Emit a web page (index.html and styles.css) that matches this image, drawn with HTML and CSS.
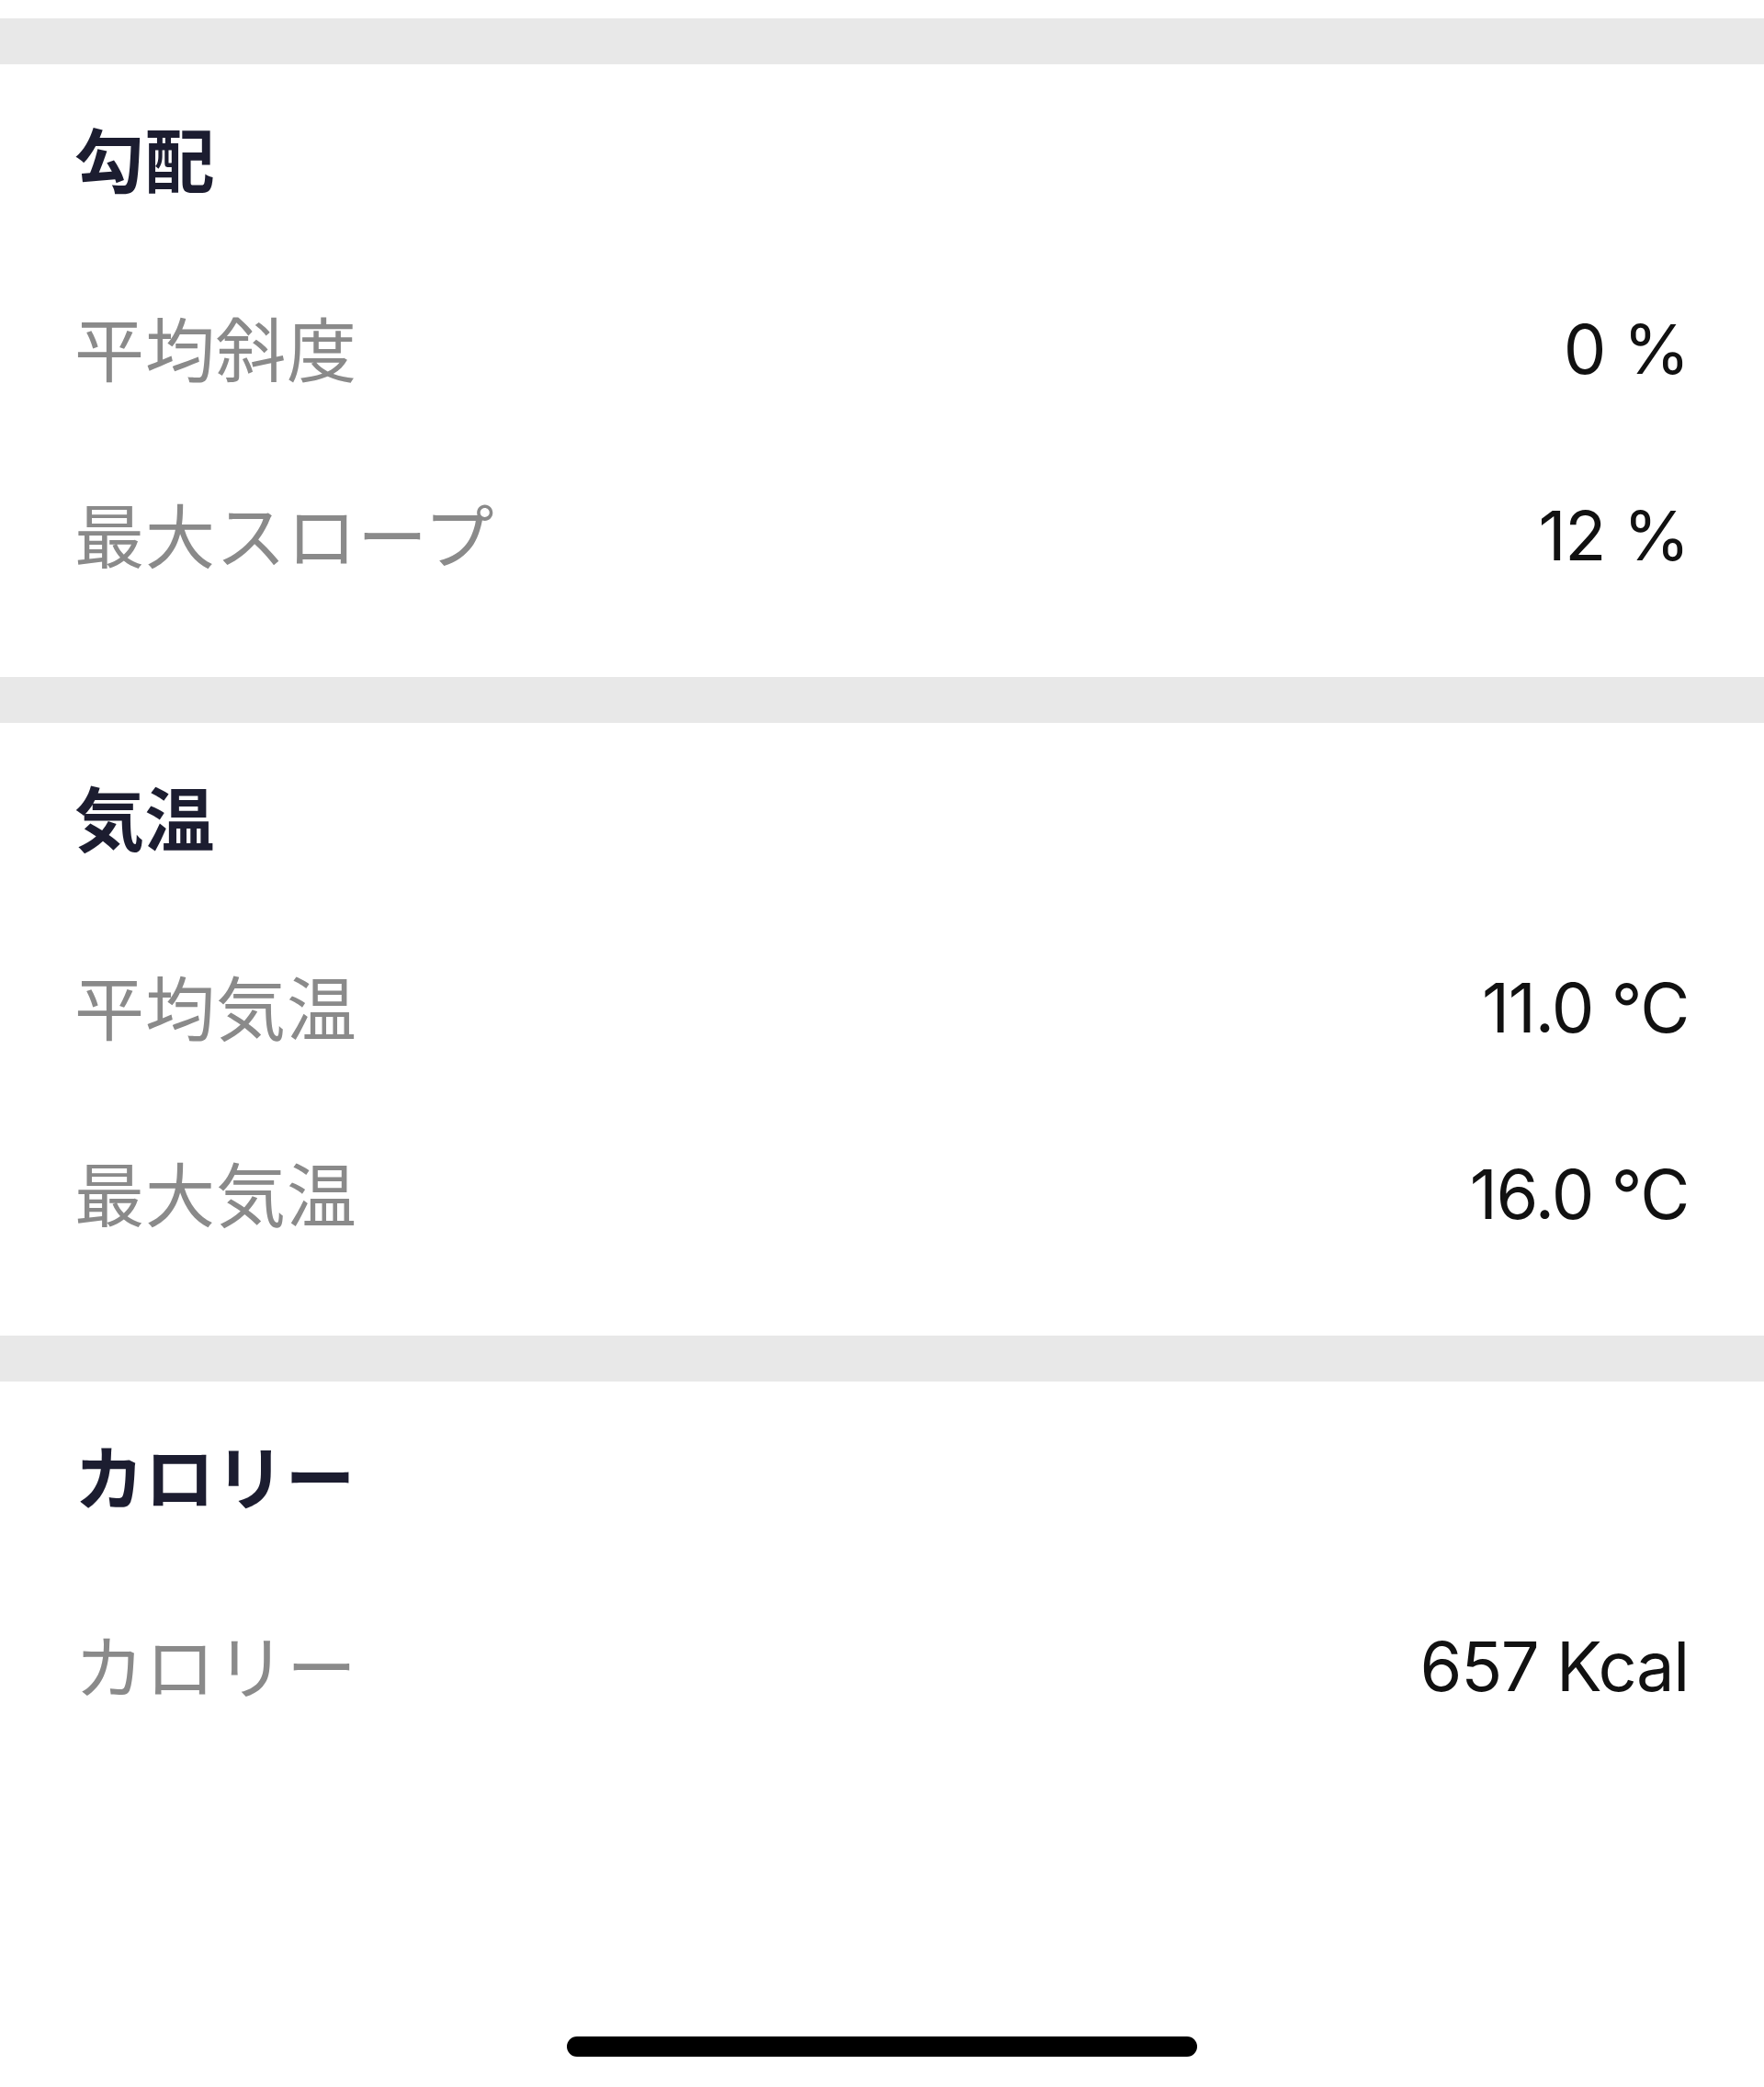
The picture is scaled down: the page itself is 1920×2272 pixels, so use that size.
FILE: index.html
```html
<!DOCTYPE html>
<html lang="ja">
<head>
<meta charset="utf-8">
<title>詳細</title>
<link rel="stylesheet" href="styles.css">
</head>
<body>
<div class="page">
  <section class="section">
    <div class="band"></div>
    <h2 class="heading">勾配</h2>
    <div class="row"><span class="label">平均斜度</span><span class="value">0 %</span></div>
    <div class="row"><span class="label">最大スロープ</span><span class="value">12 %</span></div>
  </section>
  <section class="section">
    <div class="band"></div>
    <h2 class="heading">気温</h2>
    <div class="row"><span class="label">平均気温</span><span class="value">11.0 °C</span></div>
    <div class="row"><span class="label">最大気温</span><span class="value">16.0 °C</span></div>
  </section>
  <section class="section">
    <div class="band"></div>
    <h2 class="heading">カロリー</h2>
    <div class="row"><span class="label">カロリー</span><span class="value">657 Kcal</span></div>
  </section>
  <div class="home-bar"><div class="home-indicator"></div></div>
</div>
</body>
</html>
```
FILE: styles.css
```css
html, body {
  margin: 0;
  padding: 0;
  background: #ffffff;
}
.page {
  width: 1920px;
  height: 2272px;
  padding-top: 20px;
  box-sizing: border-box;
  display: flex;
  flex-direction: column;
  font-family: Inter, "Noto Sans CJK JP", sans-serif;
}
.section {
  display: flex;
  flex-direction: column;
  padding-bottom: 51px;
}
.band {
  height: 50px;
  background: #e8e8e8;
}
.heading {
  margin: 0;
  height: 210px;
  padding: 0 84px 8px 81px;
  box-sizing: border-box;
  display: flex;
  align-items: center;
  font-family: "Noto Sans CJK JP", sans-serif;
  font-weight: 700;
  font-size: 76px;
  color: #1c1d30;
  letter-spacing: 0.5px;
}
.row {
  height: 203px;
  padding: 0 82px 0 81px;
  display: flex;
  align-items: center;
  justify-content: space-between;
}
.label {
  font-family: "Noto Sans CJK JP", sans-serif;
  font-size: 76px;
  color: #8a8a8a;
  font-weight: 400;
  letter-spacing: 1px;
  padding-bottom: 9px;
}
.value {
  font-family: Inter, "Noto Sans CJK JP", sans-serif;
  font-size: 74px;
  color: #111111;
  font-weight: 400;
  letter-spacing: -1.3px;
  padding-bottom: 4px;
}
.home-bar {
  flex: 1;
  display: flex;
  align-items: flex-end;
  justify-content: center;
  padding-bottom: 33px;
}
.home-indicator {
  width: 686px;
  height: 22px;
  border-radius: 11px;
  background: #000000;
}
```
